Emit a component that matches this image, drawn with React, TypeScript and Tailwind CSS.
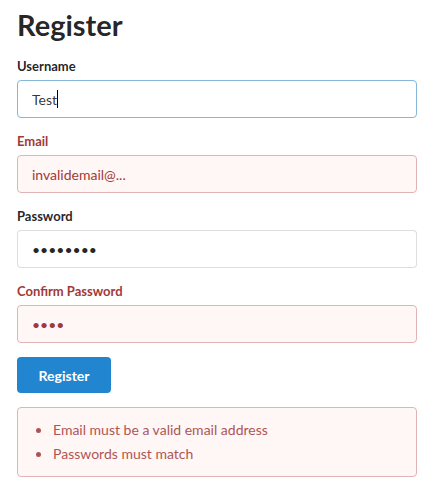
const Field = ({
  label,
  value,
  type = "text",
  error = false,
  focused = false,
}: {
  label: string;
  value: string;
  type?: string;
  error?: boolean;
  focused?: boolean;
}) => (
  <div className="mb-[14px]">
    <label
      className={`block mb-[4px] text-[13px] font-bold leading-[19px] ${
        error ? "text-[#9f3a38]" : "text-[rgba(0,0,0,0.87)]"
      }`}
    >
      {label}
    </label>
    <div className="relative">
      <input
        type={type}
        value={value}
        readOnly
        className={`w-full h-[38px] rounded-[4px] border px-[14px] text-[14px] outline-none ${
          error
            ? "bg-[#fff6f6] border-[#e0b4b4] text-[#9f3a38]"
            : focused
            ? "bg-white border-[#85b7d9] text-[rgba(0,0,0,0.8)]"
            : "bg-white border-[rgba(34,36,38,0.15)] text-[rgba(0,0,0,0.87)]"
        }`}
      />
      {focused && (
        <span className="absolute left-[40px] top-[10px] h-[18px] w-px bg-black" />
      )}
    </div>
  </div>
);

export default function App() {
  return (
    <div
      className="w-[400px] ml-[17px] bg-white"
      style={{ fontFamily: "Lato, 'Helvetica Neue', Arial, sans-serif" }}
    >
      <h1 className="pt-[6px] mb-[14px] text-[29px] font-bold leading-[37px] text-[rgba(0,0,0,0.87)]">
        Register
      </h1>
      <form>
        <Field label="Username" value="Test" focused />
        <Field label="Email" value="invalidemail@..." error />
        <Field label="Password" value="password" type="password" />
        <Field label="Confirm Password" value="1234" type="password" error />
        <button
          type="button"
          className="h-[36px] w-[94px] rounded-[4px] bg-[#2185d0] text-[14px] font-bold text-white"
        >
          Register
        </button>
        <div className="mt-[14px] rounded-[4px] border border-[#e0b4b4] bg-[#fff6f6] px-[20px] py-[10px]">
          <ul className="list-disc pl-[14px] text-[14px] leading-[24px] text-[#9f3a38] opacity-85">
            <li className="pl-px">Email must be a valid email address</li>
            <li className="pl-px">Passwords must match</li>
          </ul>
        </div>
      </form>
    </div>
  );
}
